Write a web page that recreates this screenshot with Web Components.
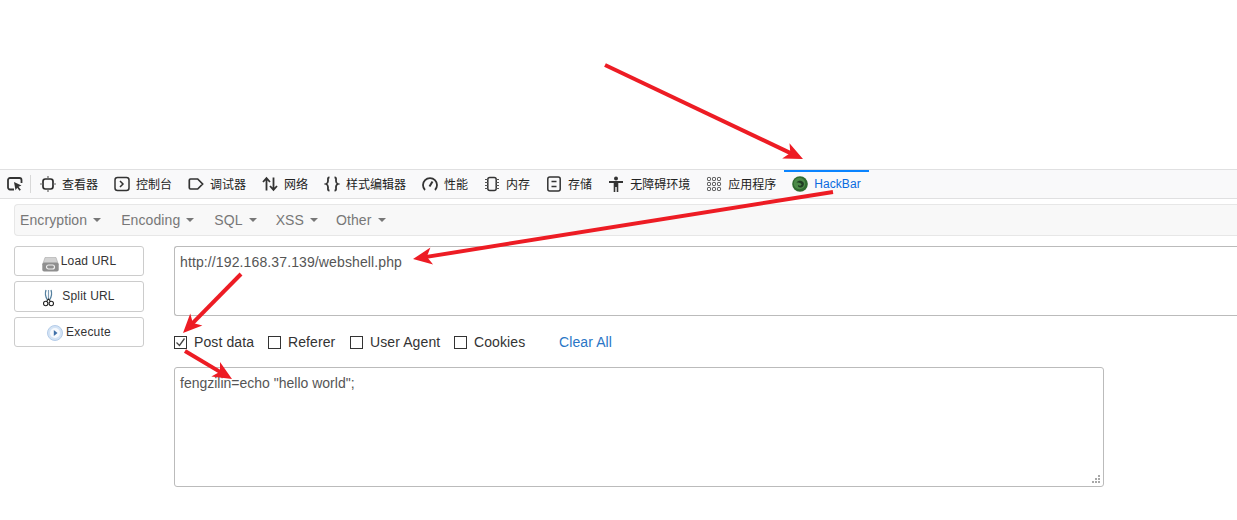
<!DOCTYPE html>
<html lang="zh">
<head>
<meta charset="utf-8">
<title>HackBar</title>
<style>
  html, body { margin:0; padding:0; background:#fff; width:1237px; height:520px; overflow:hidden; }
  body { position:relative; font-family:"Liberation Sans", Arial, sans-serif; }
  svg { display:block; }
</style>
</head>
<body>
<hb-page>
  <hb-toolbar>
    <hb-tab><svg slot="icon" width="16" height="16" viewBox="0 0 16 16" fill="none" stroke="#333" stroke-width="1.8"><path d="M7 13.500H3a2 2 0 0 1-2-2V4a2 2 0 0 1 2-2h9.500a2 2 0 0 1 2 2v3"/><path d="M7 6l7.500 3.500-3 1.200 2.400 3-1.400 1.100-2.300-3-1.700 2.400z" fill="#333" stroke="none"/></svg></hb-tab>
    <hb-tab><svg slot="icon" width="16" height="16" viewBox="0 0 16 16" fill="none" stroke="#2b2b2b" stroke-width="1.700"><rect x="3" y="3" width="10" height="10" rx="2.400"/><path d="M8 0v3M8 13v3M0 8h3M13 8h3" stroke-width="1.200" stroke="#666"/></svg>查看器</hb-tab>
    <hb-tab><svg slot="icon" width="16" height="16" viewBox="0 0 16 16" fill="none" stroke="#333" stroke-width="1.500"><rect x="1" y="1.500" width="14" height="13" rx="2.500"/><path d="M6 5l3 3-3 3"/></svg>控制台</hb-tab>
    <hb-tab><svg slot="icon" width="16" height="16" viewBox="0 0 16 16" fill="none" stroke="#333" stroke-width="1.700"><path d="M2.500 3h7.200L14.600 8l-4.900 5H2.500a1.200 1.200 0 0 1-1.200-1.200V4.200A1.200 1.200 0 0 1 2.500 3z"/></svg>调试器</hb-tab>
    <hb-tab><svg slot="icon" width="16" height="16" viewBox="0 0 16 16" fill="none" stroke="#333" stroke-width="1.800"><path d="M4.500 14.500V2.500M1 6l3.500-3.800L8 6"/><path d="M11.500 1.500v12M8 10l3.500 3.800L15 10"/></svg>网络</hb-tab>
    <hb-tab><svg slot="icon" width="16" height="16" viewBox="0 0 16 16" fill="none" stroke="#333" stroke-width="1.800"><path d="M5.500 1.500C3.500 1.500 4 3 4 5S3.600 7.500 2 8c1.600.5 2 1 2 3s-.5 3.500 1.500 3.500"/><path d="M10.500 1.500c2 0 1.500 1.500 1.500 3.500s.4 2.500 2 3c-1.600.5-2 1-2 3s.5 3.500-1.500 3.500"/></svg>样式编辑器</hb-tab>
    <hb-tab><svg slot="icon" width="16" height="16" viewBox="0 0 16 16" fill="none" stroke="#333" stroke-width="1.800"><path d="M3 14A7 7 0 1 1 13 14"/><path d="M7.500 10.500L10.500 5.500" stroke-width="2"/></svg>性能</hb-tab>
    <hb-tab><svg slot="icon" width="16" height="16" viewBox="0 0 16 16" fill="none" stroke="#333" stroke-width="1.500"><rect x="3.800" y="1.500" width="8.400" height="13" rx="2"/><path d="M1 3.500h3M1 6.500h3M1 9.500h3M1 12.500h3M12 3.500h3M12 6.500h3M12 9.500h3M12 12.500h3" stroke-width="1" stroke="#555"/></svg>内存</hb-tab>
    <hb-tab><svg slot="icon" width="16" height="16" viewBox="0 0 16 16" fill="none" stroke="#333" stroke-width="1.500"><rect x="1.800" y="1" width="12.400" height="14" rx="2"/><path d="M5.500 5.500h5M5.500 10.500h5"/></svg>存储</hb-tab>
    <hb-tab><svg slot="icon" width="16" height="16" viewBox="0 0 16 16" fill="#333"><circle cx="8" cy="2.500" r="2"/><path d="M1 5h14v2h-4.700v9H8.700v-5H7.300v5H5.700V7H1z"/></svg>无障碍环境</hb-tab>
    <hb-tab><svg slot="icon" width="16" height="16" viewBox="0 0 16 16" fill="none" stroke="#444" stroke-width="1"><rect x="1.500" y="1.500" width="3" height="3" rx=".8"/><rect x="6.500" y="1.500" width="3" height="3" rx=".8"/><rect x="11.500" y="1.500" width="3" height="3" rx=".8"/><rect x="1.500" y="6.500" width="3" height="3" rx=".8"/><rect x="6.500" y="6.500" width="3" height="3" rx=".8"/><rect x="11.500" y="6.500" width="3" height="3" rx=".8"/><rect x="1.500" y="11.500" width="3" height="3" rx=".8"/><rect x="6.500" y="11.500" width="3" height="3" rx=".8"/><rect x="11.500" y="11.500" width="3" height="3" rx=".8"/></svg>应用程序</hb-tab>
    <hb-tab active><svg slot="icon" width="16" height="16" viewBox="0 0 16 16"><circle cx="8" cy="8" r="7.800" fill="#2f6b2f"/><circle cx="7.500" cy="7.500" r="5.800" fill="#4c8a48"/><path d="M4.500 6.500C6 4 10 4 11.500 6.500c1 2 0 4.500-2.500 5-2 .3-3.500-1-3-2.500 1 1 3 1 3.500-.2C10 7.500 7 6 4.500 6.500z" fill="#1f3d22"/></svg>HackBar</hb-tab>
  </hb-toolbar>

  <hb-menu>
    <hb-menu-item>Encryption</hb-menu-item>
    <hb-menu-item>Encoding</hb-menu-item>
    <hb-menu-item style="margin-right:-1px">SQL</hb-menu-item>
    <hb-menu-item style="margin-right:-2px">XSS</hb-menu-item>
    <hb-menu-item>Other</hb-menu-item>
  </hb-menu>

  <hb-workspace>
    <hb-actions slot="actions">
      <hb-button style="height:30px;gap:2px"><svg slot="icon" width="17" height="15" viewBox="0 0 17 15" style="transform:translateY(3px)"><path d="M3 .5h11l2 6H1z" fill="#d2d2d2" stroke="#a8a8a8" stroke-width=".6"/><rect x=".3" y="5.500" width="16.400" height="9" rx="1.800" fill="#8f8f8f"/><rect x="4.500" y="8" width="8" height="4" rx="2" fill="none" stroke="#eee" stroke-width="1.200"/></svg>Load URL</hb-button>
      <hb-button style="height:31px;gap:8px;padding-bottom:2px"><svg slot="icon" width="11" height="18" viewBox="0 0 11 18" fill="none" stroke="#222" stroke-width="1.100" style="transform:translateY(2px)"><path d="M3 1C2 4 2.500 8 4.500 11M8 1c1 3 .5 7-1.500 10" stroke="#55809f" stroke-width="1.300"/><path d="M5.500 1v8" stroke="#7d9cb5" stroke-width="1.200"/><circle cx="2.700" cy="14.500" r="2.200"/><circle cx="8.300" cy="14.500" r="2.200"/><path d="M3.500 12.500l2-2.500 2 2.500"/></svg>Split URL</hb-button>
      <hb-button style="height:30px;gap:3px"><svg slot="icon" width="16" height="16" viewBox="0 0 16 16" style="transform:translateY(1px)"><circle cx="8" cy="8" r="7.500" fill="#d3e3f5" stroke="#b4cce8"/><circle cx="8" cy="8" r="5" fill="#f6f9fd"/><path d="M6.800 5l3.700 3-3.700 3z" fill="#3f6fa8"/></svg>Execute</hb-button>
    </hb-actions>
    <hb-editor slot="main" open style="width:1063px;height:70px;letter-spacing:.12px">http://192.168.37.139/webshell.php</hb-editor>
    <hb-options slot="main">
      <hb-check checked style="width:94px">Post data</hb-check>
      <hb-check style="width:82px">Referer</hb-check>
      <hb-check style="width:104px">User Agent</hb-check>
      <hb-check style="width:105px">Cookies</hb-check>
      <hb-link>Clear All</hb-link>
    </hb-options>
    <hb-editor slot="main" grip style="width:930px;height:120px">fengzilin=echo "hello world";</hb-editor>
  </hb-workspace>
</hb-page>
<hb-arrows></hb-arrows>

<script>
  const css = (strings) => `<style>${strings}</style>`;

  class Base extends HTMLElement {
    constructor(markup) {
      super();
      this.attachShadow({ mode: "open" }).innerHTML = markup;
    }
  }

  customElements.define("hb-page", class extends Base {
    constructor() {
      super(css(`:host { display:block; padding-top:169px; }`) + `<slot></slot>`);
    }
  });

  customElements.define("hb-toolbar", class extends Base {
    constructor() {
      super(css(`
        :host { display:flex; height:28px; box-sizing:content-box; background:#f9f9fa;
          border-top:1px solid #e0e0e1; border-bottom:1px solid #e0e0e1; margin-bottom:5px; }
        ::slotted(hb-tab:first-child) { padding:0 8px 0 7px; width:16px; }
      `) + `<slot></slot>`);
    }
  });

  customElements.define("hb-tab", class extends Base {
    constructor() {
      super(css(`
        :host { display:flex; align-items:center; gap:6px; padding:0 8px; position:relative;
          font:12px/16px "Noto Sans CJK SC", "Liberation Sans", sans-serif; color:#222; white-space:nowrap; }
        :host([active]) { color:#0a6be0; font-family:"Liberation Sans", Arial, sans-serif; letter-spacing:.08px; }
        :host([active])::before { content:""; position:absolute; left:0; right:0; top:0; height:2px; background:#0a84ff; }
        :host(:first-child)::after { content:""; position:absolute; right:0; top:5px; height:18px; width:1px; background:#d8d8d8; }
        :host(:first-child) { margin-right:1px; }
        ::slotted(svg) { flex:none; }
      `) + `<slot name="icon"></slot><slot></slot>`);
    }
  });

  customElements.define("hb-menu", class extends Base {
    constructor() {
      super(css(`
        :host { display:flex; gap:20px; align-items:center; box-sizing:border-box; width:1223px; height:32px;
          margin:0 0 10px 14px; padding:0 5px; background:#f8f8f8; border:1px solid #e7e7e7; border-right:0;
          border-radius:4px 0 0 4px; }
      `) + `<slot></slot>`);
    }
  });

  customElements.define("hb-menu-item", class extends Base {
    constructor() {
      super(css(`
        :host { display:flex; align-items:center; gap:6px; font:14px/20px "Liberation Sans", Arial, sans-serif;
          letter-spacing:.1px; color:#777; }
        i { width:0; height:0; border:4px solid transparent; border-top-color:#777; border-bottom:0; }
      `) + `<slot></slot><i></i>`);
    }
  });

  customElements.define("hb-workspace", class extends Base {
    constructor() {
      super(css(`
        :host { display:flex; gap:30px; padding-left:14px; }
        .main { display:flex; flex-direction:column; align-items:flex-start; }
      `) + `<slot name="actions"></slot><div class="main"><slot name="main"></slot></div>`);
    }
  });

  customElements.define("hb-actions", class extends Base {
    constructor() {
      super(css(`:host { display:flex; flex-direction:column; gap:5px; width:130px; flex:none; }`) + `<slot></slot>`);
    }
  });

  customElements.define("hb-button", class extends Base {
    constructor() {
      super(css(`
        :host { display:flex; align-items:center; justify-content:center; box-sizing:border-box;
          background:#fff; border:1px solid #ccc; border-radius:3px; color:#333; letter-spacing:.2px;
          font:12px/16px "Liberation Sans", Arial, sans-serif; }
        ::slotted(svg) { flex:none; }
      `) + `<slot name="icon"></slot><slot></slot>`);
    }
  });

  customElements.define("hb-editor", class extends Base {
    constructor() {
      super(css(`
        :host { display:block; flex:none; box-sizing:border-box; position:relative; padding:5px 5px;
          border:1px solid #bbb; border-radius:3px; background:#fff; color:#555;
          font:14px/20px "Liberation Sans", Arial, sans-serif; }
        :host([open]) { border-right:0; border-radius:3px 0 0 3px; }
        svg { position:absolute; right:2px; bottom:2px; display:none; }
        :host([grip]) svg { display:block; }
      `) + `<slot></slot><svg width="9" height="9" viewBox="0 0 9 9" fill="#a8a8a8"><rect x="6" y="0" width="2" height="2"/><rect x="3" y="3" width="2" height="2"/><rect x="6" y="3" width="2" height="2"/><rect x="0" y="6" width="2" height="2"/><rect x="3" y="6" width="2" height="2"/><rect x="6" y="6" width="2" height="2"/></svg>`);
    }
  });

  customElements.define("hb-options", class extends Base {
    constructor() {
      super(css(`:host { display:flex; align-items:center; height:51px; }`) + `<slot></slot>`);
    }
  });

  customElements.define("hb-check", class extends Base {
    constructor() {
      super(css(`
        :host { display:flex; align-items:center; gap:7px; box-sizing:border-box; color:#333; letter-spacing:.1px;
          font:14px/20px "Liberation Sans", Arial, sans-serif; }
        .box { width:13px; height:13px; margin-top:2px; box-sizing:border-box; border:1px solid #333; background:#fff; flex:none; }
        svg { display:none; }
        :host([checked]) svg { display:block; }
      `) + `<span class="box"><svg width="11" height="11" viewBox="0 0 11 11" fill="none" stroke="#444" stroke-width="1.300"><path d="M1.500 5.500l3 3 5-7"/></svg></span><slot></slot>`);
    }
  });

  customElements.define("hb-link", class extends Base {
    constructor() {
      super(css(`:host { display:block; color:#2a76c6; letter-spacing:.1px; font:14px/20px "Liberation Sans", Arial, sans-serif; }`) + `<slot></slot>`);
    }
  });

  customElements.define("hb-arrows", class extends Base {
    constructor() {
      const lines = [[605, 65, 803, 159], [833, 192, 413, 259], [241, 274, 183, 333], [185, 351, 232, 379]];
      const shapes = lines.map(([x1, y1, x2, y2]) => {
        const a = Math.atan2(y2 - y1, x2 - x1), c = Math.cos(a), s = Math.sin(a);
        const at = (d, n) => `${x2 - c * d - s * n},${y2 - s * d + c * n}`;
        const [bx, by] = at(12, 0).split(",");
        return `<line x1="${x1}" y1="${y1}" x2="${bx}" y2="${by}"/>` +
          `<polygon points="${x2},${y2} ${at(19, 8.500)} ${at(14, 0)} ${at(19, -8.500)}"/>`;
      }).join("");
      super(css(`
        :host { display:block; position:absolute; inset:0; pointer-events:none; }
        line { stroke:#ed1c24; stroke-width:4; }
        polygon { fill:#ed1c24; }
      `) + `<svg width="1237" height="520">${shapes}</svg>`);
    }
  });
</script>
</body>
</html>
